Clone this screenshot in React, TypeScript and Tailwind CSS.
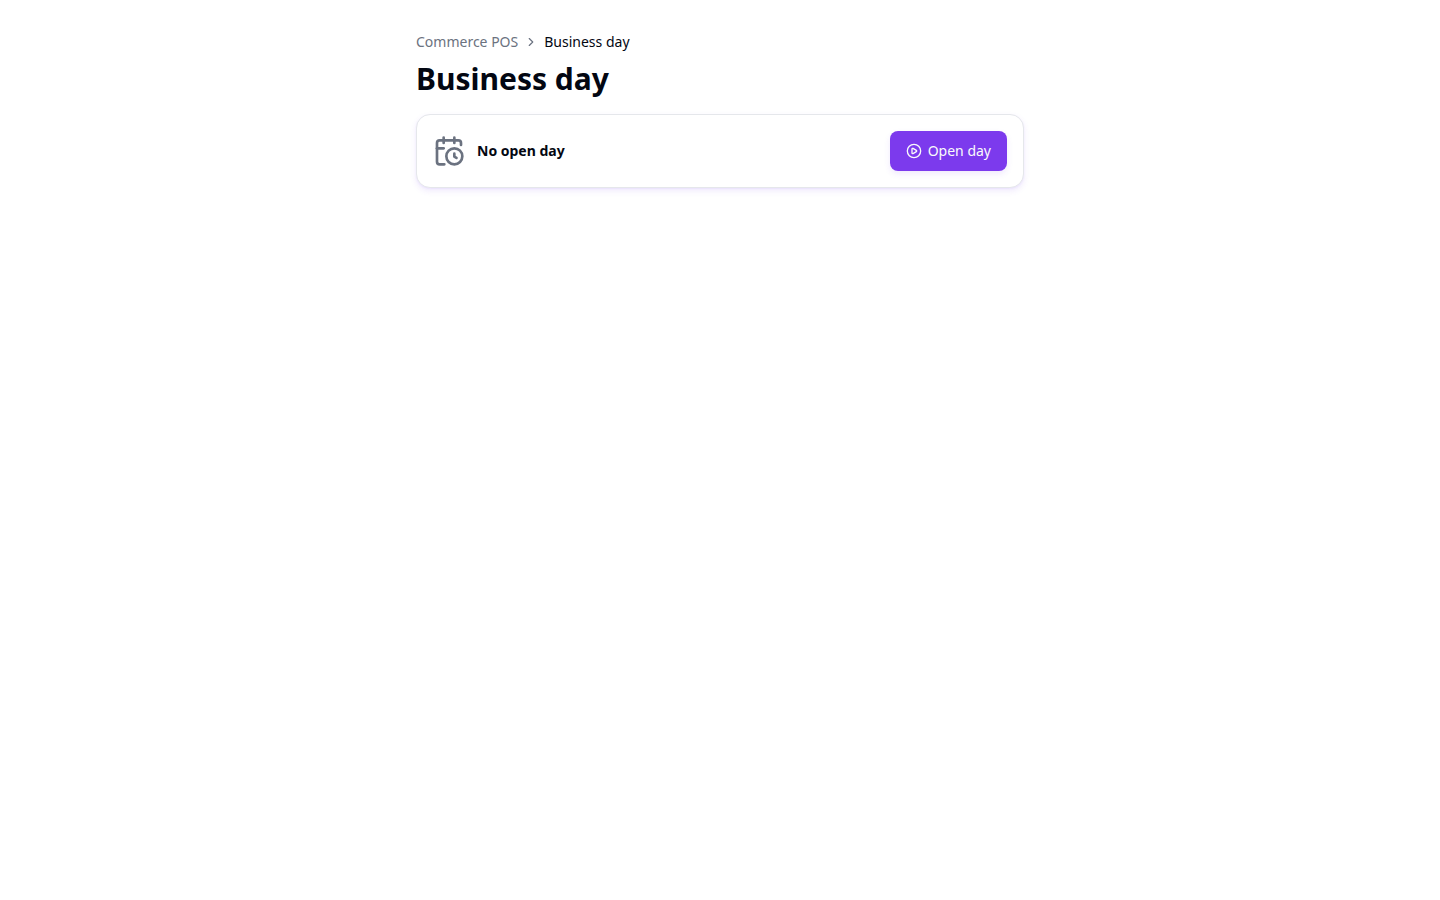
import { CalendarClock, ChevronRight, CirclePlay } from "lucide-react";

export default function App() {
  return (
    <div className="min-h-screen bg-white font-['Noto_Sans',sans-serif] text-[#030712]">
      <main className="mx-auto flex max-w-2xl flex-col gap-4 p-8">
        <header className="flex flex-col gap-2">
          <nav aria-label="Breadcrumb">
            <ol className="flex items-center gap-1.5 text-sm text-[#6b7280]">
              <li>
                <a href="#">Commerce POS</a>
              </li>
              <li aria-hidden="true">
                <ChevronRight className="size-3.5" />
              </li>
              <li aria-current="page" className="text-[#030712]">
                Business day
              </li>
            </ol>
          </nav>
          <h1 className="text-3xl leading-[38px] font-bold">Business day</h1>
        </header>
        <section className="flex items-center justify-between rounded-[14px] border border-[#e5e7eb] bg-white p-4 shadow-[0_3px_6px_rgba(109,50,240,0.10),0_1px_2px_rgba(109,50,240,0.06)]">
          <div className="flex items-center gap-3">
            <CalendarClock className="size-8 text-[#6b7280]" />
            <p className="text-sm font-bold">No open day</p>
          </div>
          <button
            type="button"
            className="flex h-10 items-center gap-1.5 rounded-lg bg-[#7c3aed] px-4 text-sm text-[#f9fafb] shadow-[0_3px_6px_rgba(109,50,240,0.10)]"
          >
            <CirclePlay className="size-4" />
            Open day
          </button>
        </section>
      </main>
    </div>
  );
}
